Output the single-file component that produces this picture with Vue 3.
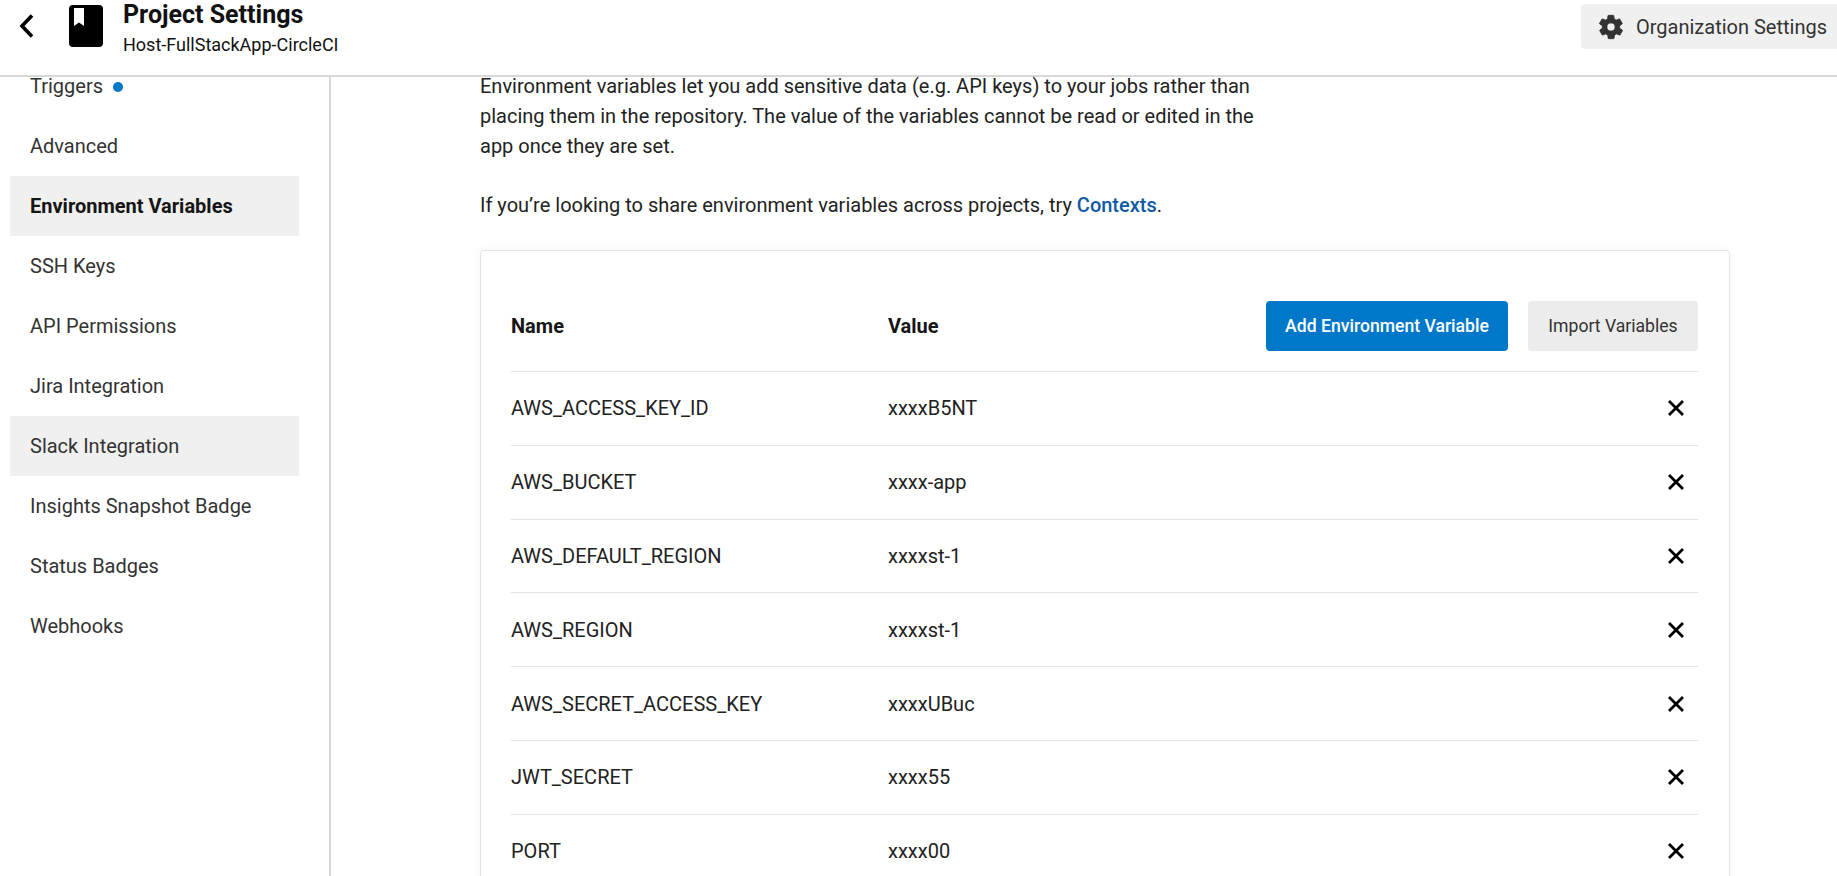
<template>
  <div class="page">
    <header class="topbar">
      <button class="back" aria-label="Back">
        <svg width="18" height="26" viewBox="0 0 18 26"><path d="M15 2.500 5 13l10 10.500" fill="none" stroke="#000" stroke-width="3.600" /></svg>
      </button>
      <svg class="project-icon" width="34" height="42" viewBox="0 0 34 42">
        <path d="M4 0h26a4 4 0 0 1 4 4v34a4 4 0 0 1-4 4H4a4 4 0 0 1-4-4V4a4 4 0 0 1 4-4Z" fill="#000" />
        <path d="M5 3h10v18l-5-3.600L5 21Z" fill="#fff" />
      </svg>
      <div class="titles">
        <div class="title">Project Settings</div>
        <div class="subtitle">Host-FullStackApp-CircleCI</div>
      </div>
      <button class="org-btn">
        <svg width="28" height="28" viewBox="0 0 24 24"><path fill="#333" stroke="#333" stroke-width=".7" d="M19.4 13a7.5 7.5 0 0 0 0-2l2.100-1.600a.5.5 0 0 0 .1-.6l-2-3.500a.5.5 0 0 0-.6-.2l-2.500 1a7.500 7.500 0 0 0-1.700-1l-.4-2.700a.5.5 0 0 0-.5-.4h-4a.5.5 0 0 0-.5.4l-.4 2.700a7.500 7.500 0 0 0-1.700 1l-2.500-1a.5.5 0 0 0-.6.2l-2 3.500a.5.5 0 0 0 .1.6L4.600 11a7.500 7.500 0 0 0 0 2l-2.100 1.600a.5.5 0 0 0-.1.6l2 3.500a.5.5 0 0 0 .6.2l2.500-1a7.500 7.500 0 0 0 1.700 1l.4 2.700a.5.5 0 0 0 .5.4h4a.5.5 0 0 0 .5-.4l.4-2.700a7.500 7.500 0 0 0 1.700-1l2.500 1a.5.5 0 0 0 .6-.2l2-3.500a.5.5 0 0 0-.1-.6ZM12 15.500a3.500 3.500 0 1 1 0-7 3.500 3.500 0 0 1 0 7Z" /></svg>
        <span>Organization Settings</span>
      </button>
    </header>

    <div class="body">
      <aside class="sidebar">
        <nav class="nav">
          <a
            v-for="item in navItems"
            :key="item.label"
            class="nav-item"
            :class="{ active: item.active, hover: item.hover }"
          >
            {{ item.label }}
            <span v-if="item.dot" class="dot"></span>
          </a>
        </nav>
      </aside>

      <main class="main">
        <p class="intro">
          Environment variables let you add sensitive data (e.g. API keys) to your jobs rather than
          placing them in the repository. The value of the variables cannot be read or edited in the
          app once they are set.
        </p>
        <p class="intro second">
          If you’re looking to share environment variables across projects, try
          <a class="link">Contexts</a>.
        </p>

        <section class="card">
          <div class="row head">
            <div class="col-name">Name</div>
            <div class="col-value">Value</div>
            <div class="actions">
              <button class="btn primary">Add Environment Variable</button>
              <button class="btn secondary">Import Variables</button>
            </div>
          </div>
          <div v-for="v in variables" :key="v.name" class="row">
            <div class="col-name">{{ v.name }}</div>
            <div class="col-value">{{ v.value }}</div>
            <button class="remove" aria-label="Remove">
              <svg width="16" height="16" viewBox="0 0 16 16"><path d="M1 1l14 14M15 1 1 15" stroke="#000" stroke-width="2.800" fill="none" /></svg>
            </button>
          </div>
        </section>
      </main>
    </div>
  </div>
</template>

<script setup>
const navItems = [
  { label: "Triggers", dot: true },
  { label: "Advanced" },
  { label: "Environment Variables", active: true },
  { label: "SSH Keys" },
  { label: "API Permissions" },
  { label: "Jira Integration" },
  { label: "Slack Integration", hover: true },
  { label: "Insights Snapshot Badge" },
  { label: "Status Badges" },
  { label: "Webhooks" },
];

const variables = [
  { name: "AWS_ACCESS_KEY_ID", value: "xxxxB5NT" },
  { name: "AWS_BUCKET", value: "xxxx-app" },
  { name: "AWS_DEFAULT_REGION", value: "xxxxst-1" },
  { name: "AWS_REGION", value: "xxxxst-1" },
  { name: "AWS_SECRET_ACCESS_KEY", value: "xxxxUBuc" },
  { name: "JWT_SECRET", value: "xxxx55" },
  { name: "PORT", value: "xxxx00" },
];
</script>

<style>
html,
body {
  margin: 0;
  overflow: hidden;
  background: #fff;
}
</style>

<style scoped>
.page {
  height: 876px;
  display: flex;
  flex-direction: column;
  overflow: hidden;
  font-family: Roboto, sans-serif;
  font-size: 20px;
  color: #161616;
}

.topbar {
  flex: none;
  display: flex;
  align-items: flex-start;
  border-bottom: 2px solid #d8d8d8;
  box-sizing: content-box;
  height: 75px;
}

.back {
  border: 0;
  background: none;
  padding: 0;
  margin: 13px 0 0 17px;
  display: flex;
}

.project-icon {
  margin: 5px 0 0 34px;
}

.titles {
  margin-left: 20px;
  padding-top: 1px;
}

.title {
  font-size: 25px;
  font-weight: 700;
  line-height: 28px;
  color: #111;
}

.subtitle {
  font-size: 18px;
  font-weight: 400;
  line-height: 20px;
  margin-top: 6px;
  color: #111;
}

.org-btn {
  margin: 4px 0 0 auto;
  height: 45px;
  width: 256px;
  flex: none;
  border: 0;
  border-radius: 4px 0 0 4px;
  background: #f0f0f0;
  display: flex;
  align-items: center;
  gap: 11px;
  padding: 0 0 0 16px;
  font: 400 20px Roboto, sans-serif;
  color: #333;
  white-space: nowrap;
  box-sizing: border-box;
}

.body {
  flex: 1;
  display: flex;
  min-height: 0;
}

.sidebar {
  width: 329px;
  flex: none;
  border-right: 2px solid #d8d8d8;
  box-sizing: content-box;
  overflow: hidden;
}

.nav {
  margin-top: -21px;
  padding-left: 10px;
}

.nav-item {
  display: flex;
  align-items: center;
  gap: 10px;
  width: 289px;
  height: 60px;
  padding-left: 20px;
  box-sizing: border-box;
  line-height: 16px;
  color: #333;
}

.nav-item.active {
  background: #f0f0f0;
  font-weight: 700;
  color: #161616;
}

.nav-item.hover {
  background: #f0f0f0;
}

.dot {
  width: 10px;
  height: 10px;
  border-radius: 50%;
  background: #0078ca;
  margin-top: 2px;
}

.main {
  flex: 1;
  padding-left: 149px;
  min-width: 0;
}

.intro {
  margin: -6px 0 0;
  width: 800px;
  line-height: 30px;
  color: #222;
}

.intro.second {
  margin-top: 29px;
}

.link {
  color: #0e5aa7;
  font-weight: 500;
}

.card {
  width: 1250px;
  margin-top: 30px;
  padding: 0 31px 0 30px;
  box-sizing: border-box;
  border: 1px solid #e3e3e3;
  border-radius: 4px;
  box-shadow: 0 0 10px rgba(0, 0, 0, 0.05);
}

.row {
  height: 73.8px;
  display: flex;
  align-items: center;
  border-bottom: 1px solid #e3e3e3;
  box-sizing: border-box;
  color: #222;
}

.row.head {
  height: 121px;
  padding-top: 30px;
  font-weight: 700;
  color: #161616;
}

.col-name {
  width: 377px;
  flex: none;
}

.col-value {
  flex: 1;
}

.actions {
  display: flex;
  gap: 20px;
}

.btn {
  height: 50px;
  border: 0;
  border-radius: 4px;
  font: 500 17.6px Roboto, sans-serif;
}

.primary {
  width: 242px;
  background: #0078ca;
  color: #fff;
}

.secondary {
  width: 170px;
  background: #ececec;
  color: #333;
  font-weight: 400;
}

.remove {
  border: 0;
  background: none;
  padding: 0;
  margin-right: 14px;
  display: flex;
}
</style>
